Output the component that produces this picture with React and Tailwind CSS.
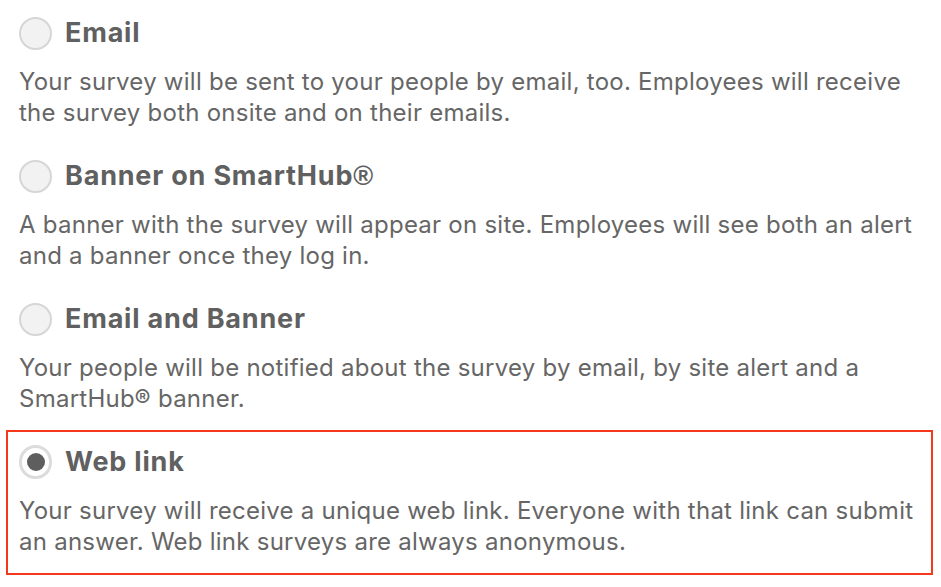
import React from "react";

const items = [
  {
    title: "Email",
    body: "Your survey will be sent to your people by email, too. Employees will receive the survey both onsite and on their emails.",
  },
  {
    title: "Banner on SmartHub®",
    body: "A banner with the survey will appear on site. Employees will see both an alert and a banner once they log in.",
  },
  {
    title: "Email and Banner",
    body: "Your people will be notified about the survey by email, by site alert and a SmartHub® banner.",
  },
  {
    title: "Web link",
    body: "Your survey will receive a unique web link. Everyone with that link can submit an answer. Web link surveys are always anonymous.",
    selected: true,
  },
];

function WithReg({ text }) {
  const parts = text.split("®");
  return parts.map((p, i) => (
    <React.Fragment key={i}>
      {p}
      {i < parts.length - 1 && (
        <span style={{ fontFamily: "'Liberation Sans', Arial, sans-serif" }}>®</span>
      )}
    </React.Fragment>
  ));
}

function Radio({ checked }) {
  if (checked) {
    return (
      <span className="flex h-[34px] w-[33px] shrink-0 items-center justify-center rounded-full border-[3px] border-[#dcdcdc] bg-white">
        <span className="h-[18px] w-[18px] rounded-full bg-[#5e5e5e]" />
      </span>
    );
  }
  return (
    <span className="h-[33px] w-[33px] shrink-0 rounded-full border-2 border-[#d6d6d6] bg-[#f2f2f2]" />
  );
}

export default function App() {
  return (
    <div
      className="h-[587px] w-[941px] overflow-hidden bg-white pl-[6px] pr-[8px] pt-[1px]"
      style={{ fontFamily: "Inter, 'Noto Sans', sans-serif" }}
    >
      <div className="flex flex-col">
        {items.map((it) => (
          <div
            key={it.title}
            className={
              "border-2 px-[11px] pt-[13px] " +
              (it.selected
                ? "h-[145px] border-[#f5371c]"
                : "h-[143px] border-transparent")
            }
          >
            <div className="flex items-center gap-[13px]">
              <Radio checked={it.selected} />
              <span className="text-[27px] font-bold leading-[34px] tracking-[0.8px] text-[#606060]">
                <WithReg text={it.title} />
              </span>
            </div>
            <p className="mt-[16px] text-[24px] leading-[31px] tracking-[0.25px] text-[#666666]">
              {it.body}
            </p>
          </div>
        ))}
      </div>
    </div>
  );
}
